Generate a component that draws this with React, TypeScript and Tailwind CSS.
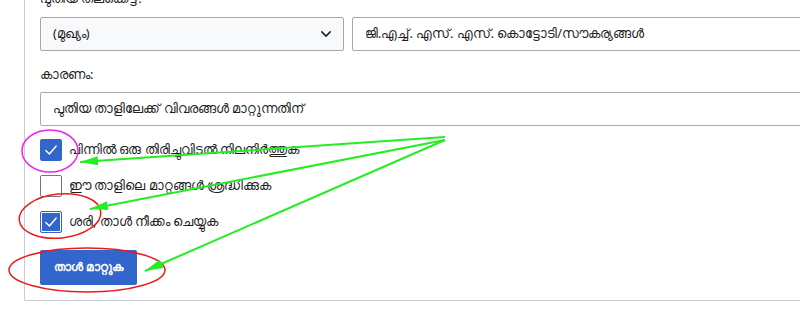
import React from "react";

const Check = () => (
  <svg viewBox="0 0 20 20" className="w-[16px] h-[16px]" fill="none" stroke="white" strokeWidth="1.8" strokeLinecap="round" strokeLinejoin="round">
    <polyline points="3.5,10.5 8,15 16.5,5" />
  </svg>
);

export default function App() {
  return (
    <div className="relative w-[800px] h-[324px] overflow-hidden bg-white text-[#202122] text-[12.6px]" style={{ fontFamily: '"Noto Sans", "DejaVu Sans", sans-serif' }}>
      <div className="ml-[24px] mt-[-12px] w-[820px] border-l border-b border-[#c8ccd1] rounded-bl-[2px] pl-[15px] pb-[15px]">
        <div className="h-[22px] leading-[22px]">പുതിയ തലക്കെട്ട്:</div>
        <div className="mt-[7px] flex gap-[8px]">
          <div className="w-[304px] h-[34px] flex items-center justify-between bg-[#f8f9fa] border border-[#a2a9b1] rounded-[2px] pl-[12px] pr-[10px]">
            <span>(മുഖ്യം)</span>
            <svg viewBox="0 0 20 20" className="w-[14px] h-[14px]" fill="none" stroke="#202122" strokeWidth="2.2" strokeLinecap="round" strokeLinejoin="round">
              <polyline points="4,7 10,13 16,7" />
            </svg>
          </div>
          <div className="flex-1 h-[34px] flex items-center bg-white border border-[#a2a9b1] rounded-[2px] pl-[12px]">
            ജി.എച്ച്. എസ്. എസ്. കൊട്ടോടി/സൗകര്യങ്ങൾ
          </div>
        </div>
        <div className="mt-[13px] h-[22px] leading-[22px]">കാരണം:</div>
        <div className="mt-[6px] h-[34px] flex items-center bg-white border border-[#a2a9b1] rounded-[2px] pl-[12px]">
          പുതിയ താളിലേക്ക് വിവരങ്ങൾ മാറ്റുന്നതിന്
        </div>
        <div className="mt-[13px] flex flex-col gap-[14px]">
          <div className="flex items-center h-[22px]">
            <div className="w-[22px] h-[22px] rounded-[2px] bg-[#3366cc] border border-[#3366cc] flex items-center justify-center">
              <Check />
            </div>
            <span className="ml-[7px]">പിന്നിൽ ഒരു തിരിച്ചുവിടൽ നിലനിർത്തുക</span>
          </div>
          <div className="flex items-center h-[22px]">
            <div className="w-[22px] h-[22px] rounded-[2px] bg-white border border-[#72777d]" />
            <span className="ml-[7px]">ഈ താളിലെ മാറ്റങ്ങൾ ശ്രദ്ധിക്കുക</span>
          </div>
          <div className="flex items-center h-[22px]">
            <div className="w-[22px] h-[22px] rounded-[2px] bg-[#3366cc] border border-[#3366cc] shadow-[inset_0_0_0_1px_#ffffff] flex items-center justify-center">
              <Check />
            </div>
            <span className="ml-[7px]">ശരി, താൾ നീക്കം ചെയ്യുക</span>
          </div>
        </div>
        <button className="mt-[17px] w-[97px] h-[35px] rounded-[2px] bg-[#3366cc] text-white font-bold text-[12.4px] flex items-center justify-center">
          താൾ മാറ്റുക
        </button>
      </div>

      <svg className="absolute inset-0 pointer-events-none" width="800" height="324" viewBox="0 0 800 324">
        <defs>
          <marker id="ah" viewBox="0 0 20 10" refX="20" refY="5" markerWidth="18" markerHeight="9" markerUnits="userSpaceOnUse" orient="auto">
            <polygon points="0,0 20,5 0,10" fill="#22ee22" />
          </marker>
        </defs>
        <ellipse cx="50" cy="151" rx="28" ry="21" fill="none" stroke="#ee22ee" strokeWidth="1.5" />
        <ellipse cx="60" cy="216" rx="41" ry="22" fill="none" stroke="#e81c1c" strokeWidth="1.5" transform="rotate(-6 60 216)" />
        <ellipse cx="87" cy="270" rx="78" ry="22" fill="none" stroke="#e81c1c" strokeWidth="1.5" />
        <g stroke="#22ee22" strokeWidth="2" fill="none">
          <line x1="445" y1="137" x2="80" y2="162" markerEnd="url(#ah)" />
          <line x1="445" y1="140" x2="90" y2="209" markerEnd="url(#ah)" />
          <line x1="445" y1="140" x2="145" y2="271" markerEnd="url(#ah)" />
        </g>
      </svg>
    </div>
  );
}
